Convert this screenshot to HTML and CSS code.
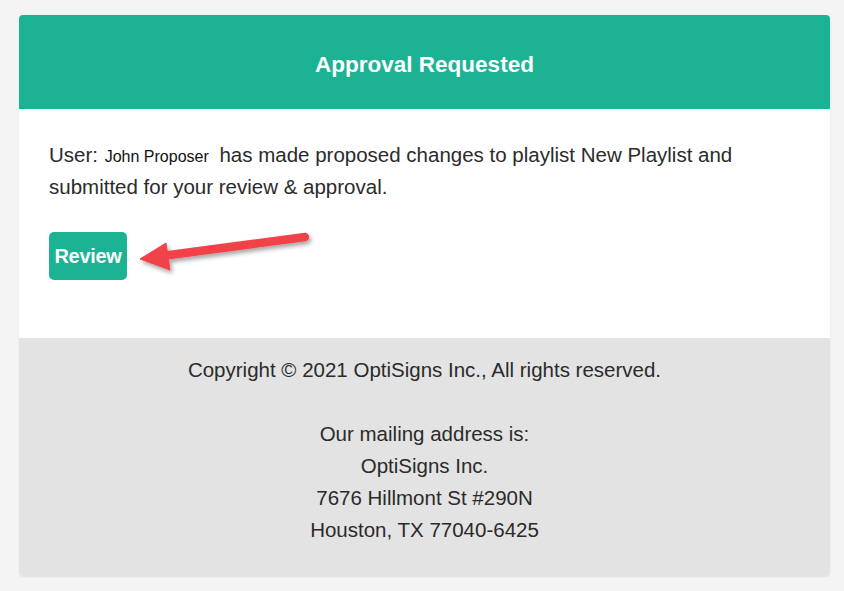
FILE: index.html
```html
<!DOCTYPE html>
<html>
<head>
<meta charset="utf-8">
<link rel="stylesheet" href="styles.css">
</head>
<body>
<div class="card">
  <div class="header">Approval Requested</div>
  <div class="content">
    <p class="msg"><span>User:</span> <span class="name">John Proposer</span> <span>has made proposed changes to playlist New Playlist and</span><br><span>submitted for your review &amp; approval.</span></p>
    <a class="btn">Review</a>
    <svg class="arrow" width="200" height="60" viewBox="130 220 200 60">
      <defs>
        <filter id="sh" x="-20%" y="-50%" width="140%" height="200%">
          <feDropShadow dx="2" dy="3" stdDeviation="2" flood-color="#000" flood-opacity="0.35"/>
        </filter>
      </defs>
      <g filter="url(#sh)" fill="#f24349" stroke="#f24349">
        <line x1="305" y1="237" x2="162" y2="256" stroke-width="8.5" stroke-linecap="round"/>
        <polygon points="140,259 166,243 170,270" stroke-width="1" stroke-linejoin="round"/>
      </g>
    </svg>
  </div>
  <div class="footer">
    <p>Copyright © 2021 OptiSigns Inc., All rights reserved.<br><br>Our mailing address is:<br>OptiSigns Inc.<br>7676 Hillmont St #290N<br>Houston, TX 77040-6425</p>
  </div>
</div>
</body>
</html>
```
FILE: styles.css
```css
html, body {
  margin: 0;
  padding: 0;
  background: #f4f4f4;
}
body {
  padding: 15px 14px 16px 19px;
  font-family: "Liberation Sans", Arial, sans-serif;
}
.card {
  width: 811px;
  border-radius: 4px;
  overflow: hidden;
  box-shadow: 0 1px 2px rgba(0,0,0,0.08);
}
.header {
  background: #1bb394;
  color: #fff;
  font-weight: bold;
  font-size: 22.5px;
  text-align: center;
  height: 94px;
  line-height: 100px;
}
.content {
  position: relative;
  background: #fff;
  padding: 31px 30px 58px 30px;
}
.msg {
  margin: 0 0 30px 0;
  font-size: 20.5px;
  line-height: 30px;
  color: #2b2b2b;
}
.name {
  font-size: 16px;
  color: #111;
  padding: 0 5px 0 1px;
}
.btn {
  display: inline-flex;
  align-items: center;
  justify-content: center;
  width: 78px;
  height: 48px;
  border-radius: 5px;
  background: #1bb394;
  color: #fff;
  font-weight: bold;
  font-size: 20px;
  letter-spacing: -0.3px;
}
.arrow {
  position: absolute;
  left: 111px;
  top: 111px;
}
.footer {
  background: #e3e3e3;
  padding: 16px 20px 30px;
  text-align: center;
}
.footer p {
  margin: 0;
  font-size: 20.5px;
  line-height: 32px;
  color: #2b2b2b;
}
```
